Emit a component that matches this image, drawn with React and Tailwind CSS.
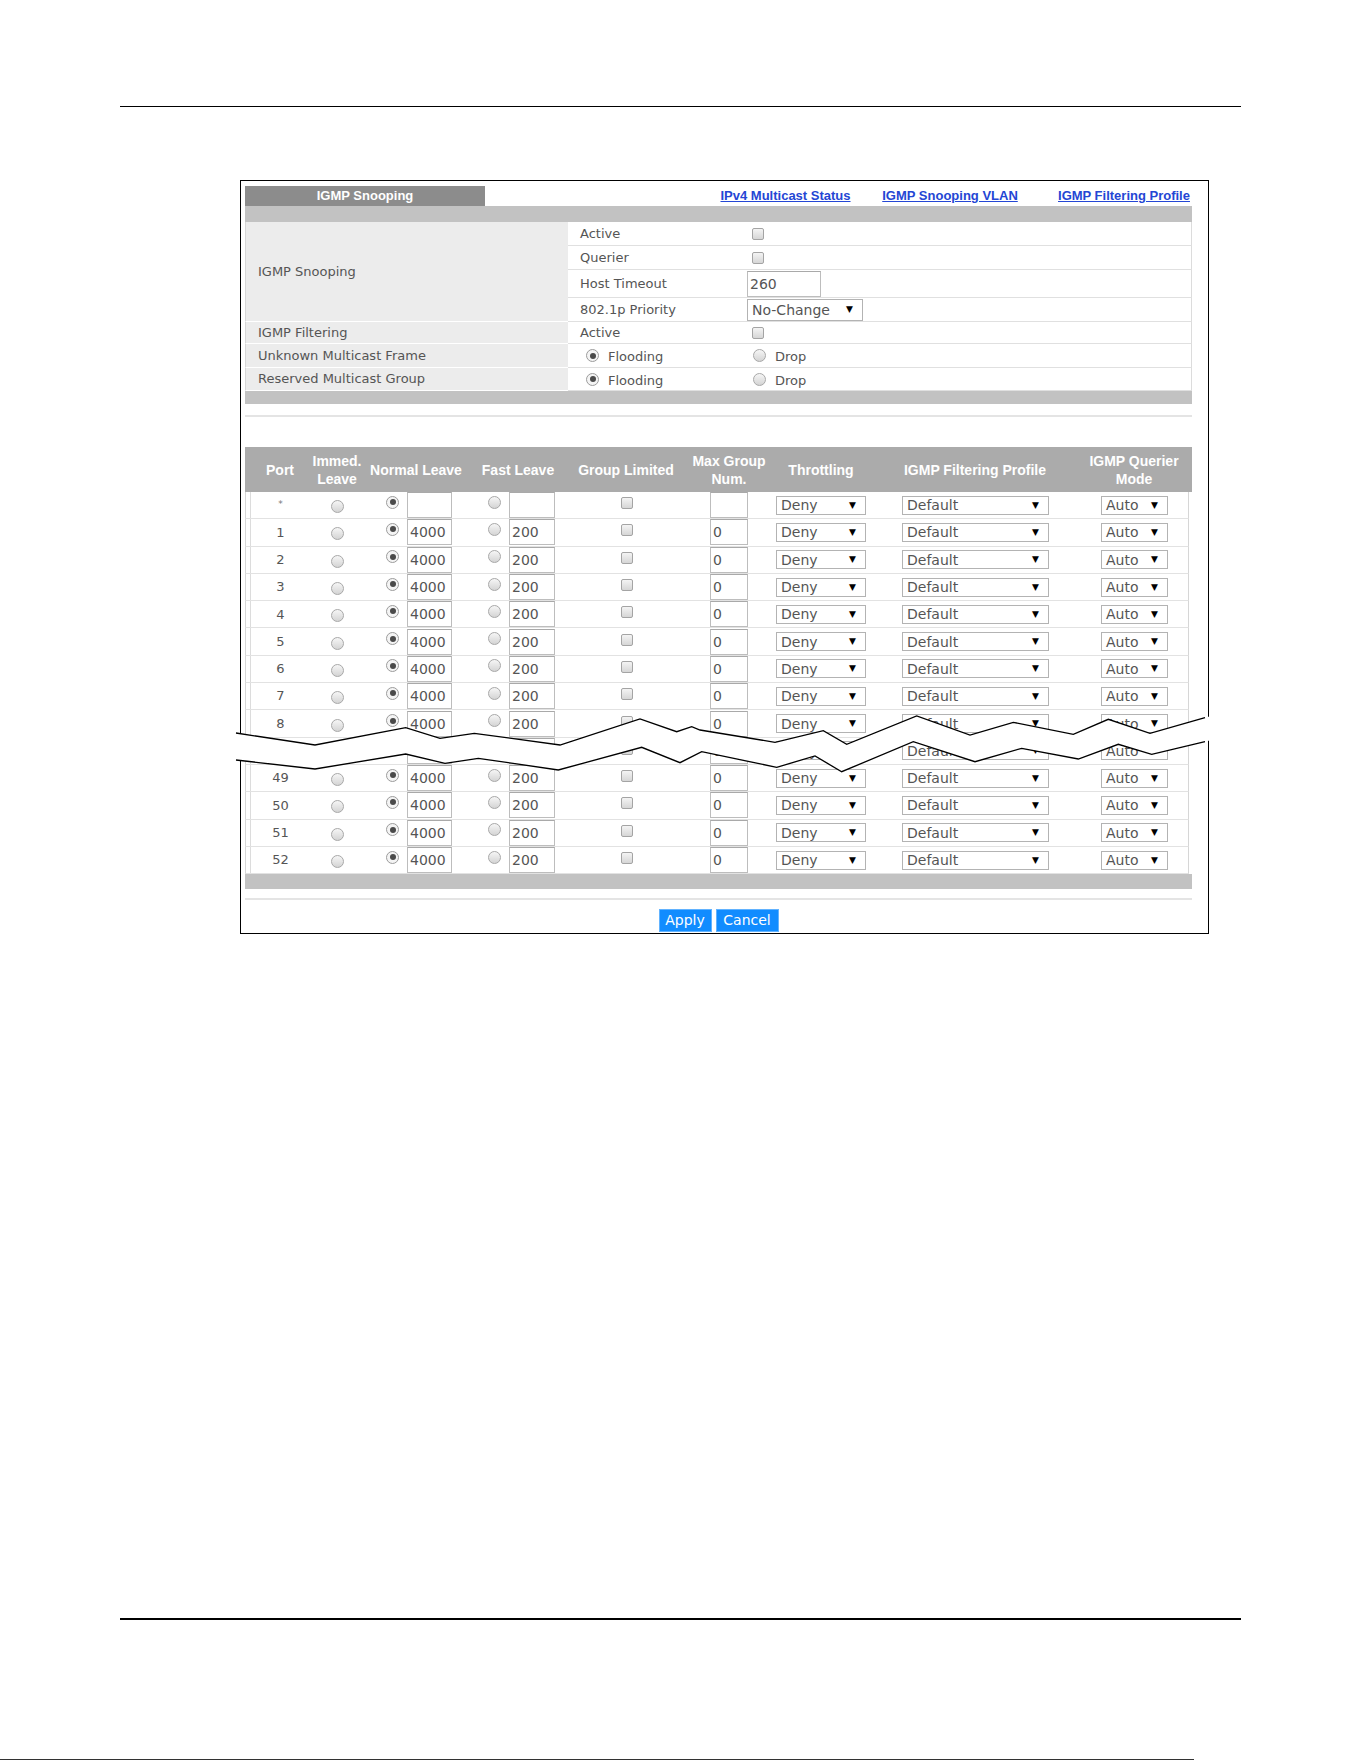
import React from "react";

const Radio = ({ checked, className = "" }) => (
  <div
    className={
      "w-[13px] h-[13px] shrink-0 rounded-full border flex items-center justify-center " +
      (checked ? "border-[#9c9c9c] bg-[#f4f4f4] " : "border-[#a8a8a8] bg-linear-to-b from-[#f6f6f6] to-[#d4d4d4] ") +
      className
    }
  >
    {checked && <div className="w-[6px] h-[6px] rounded-full bg-[#4a4a4a]" />}
  </div>
);

const Checkbox = ({ className = "" }) => (
  <div
    className={
      "w-[12px] h-[12px] shrink-0 rounded-[2px] border border-[#a4a4a4] bg-linear-to-b from-[#f4f4f4] to-[#d6d6d6] " +
      className
    }
  />
);

const Input = ({ value, w, h = "h-[26px]", className = "" }) => (
  <div
    className={
      "shrink-0 border border-[#bdbdbd] border-t-[#a9a9a9] bg-white text-[14px] leading-none text-[#555] pl-[2px] flex items-center " +
      w + " " + h + " " + className
    }
  >
    {value}
  </div>
);

const Select = ({ value, w, h = "h-[19px]", className = "" }) => (
  <div
    className={
      "shrink-0 border border-[#b3b3b3] bg-white text-[14px] leading-none text-[#555] pl-[4px] pr-[9px] flex items-center justify-between " +
      w + " " + h + " " + className
    }
  >
    <span>{value}</span>
    <span className="text-[9px] text-black">▼</span>
  </div>
);

const ports = ["*", "1", "2", "3", "4", "5", "6", "7", "8", "9", "49", "50", "51", "52"];

const PortRow = ({ p }) => {
  const star = p === "*";
  return (
    <div className="flex items-center h-[27.3px] w-[944px] border-b border-b-[#e2e2e2] border-x border-x-[#d6d6d6]">
      <div className="ml-[4px] w-[60px] h-full border-l border-[#dcdcdc] flex items-center justify-center text-[13px] text-[#555]">
        {star ? <span className="text-[9px] text-[#777]">*</span> : p}
      </div>
      <div className="w-[54px] flex justify-center mt-[3px]">
        <Radio />
      </div>
      <Radio checked className="ml-[22px] mb-[6px]" />
      <Input value={star ? "" : "4000"} w="w-[45px]" className="ml-[8px]" />
      <Radio className="ml-[36px] mb-[6px]" />
      <Input value={star ? "" : "200"} w="w-[46px]" className="ml-[8px]" />
      <Checkbox className="ml-[66px] mb-[4px]" />
      <Input value={star ? "" : "0"} w="w-[38px]" className="ml-[77px]" />
      <Select value="Deny" w="w-[90px]" className="ml-[28px]" />
      <Select value="Default" w="w-[147px]" className="ml-[36px]" />
      <Select value="Auto" w="w-[67px]" className="ml-[52px]" />
    </div>
  );
};

const HeadCell = ({ w, children }) => (
  <div className={"h-full flex items-center justify-center text-center " + w}>
    <div className="whitespace-nowrap font-['Liberation_Sans',Arial,sans-serif] text-[14px] leading-[18px] font-bold text-white">
      {children}
    </div>
  </div>
);

const SetRow = ({ h, label, children }) => (
  <div className={"flex items-center border-b border-b-[#e0e0e0] border-r border-r-[#dcdcdc] pl-[12px] " + h}>
    <div className="w-[167px] flex items-center text-[13px] text-[#555]">{label}</div>
    <div className="flex items-center">{children}</div>
  </div>
);

const LeftCell = ({ h, children }) => (
  <div className={"w-[323px] shrink-0 bg-[#ececec] border-l border-l-[#d6d6d6] border-b border-b-white flex items-center pl-[12px] text-[13px] text-[#555] " + h}>
    {children}
  </div>
);

const top1 = [
  [236, 733], [315, 745], [405.7, 727.7], [440, 738.3], [474.3, 733.3], [560, 745], [640, 719],
  [676.7, 731.7], [691.7, 726.7], [700, 730], [775, 742.3], [823.3, 730.7], [846.7, 744.3],
  [916.7, 716], [970, 735], [1013.3, 722.3], [1073.3, 734.3], [1108.3, 719.3], [1150, 733.3], [1205, 717.7],
];
const bot1 = [
  [236, 760], [315, 769], [405.7, 754], [445, 763.3], [478.3, 758.3], [558.3, 770], [641.7, 747.3],
  [680, 762.7], [701.7, 751.7], [776.7, 767.3], [815, 756], [841.7, 771.7], [913.3, 741.7],
  [975, 761.7], [1021.7, 748.3], [1078.3, 759], [1118.3, 744.3], [1151.7, 754.3], [1205, 741.7],
];
const pts = (a) => a.map(([x, y]) => `${x},${y}`).join(" ");
const fillPts =
  pts([[236, 733], ...top1, [1212, 715.7]]) + " " + pts([[1212, 739.7], ...[...bot1].reverse(), [236, 760]]);

const FloodLabel = () => (
  <>
    <Radio checked className="ml-[6px]" />
    <span className="ml-[9px] mt-[3px]">Flooding</span>
  </>
);

export default function App() {
  return (
    <div className="relative w-[1361px] h-[1761px] bg-white overflow-hidden font-['DejaVu_Sans',sans-serif]">
      <div className="pt-[106px] pl-[120px]">
        <div className="w-[1121px] h-[1px] bg-black" />
      </div>

      <div className="mt-[73px] ml-[240px] w-[969px] border border-black pt-[5px] pl-[4px] pb-[1px]">
        <div className="w-[947px]">
          {/* Tab row */}
          <div className="flex items-center h-[20px] font-['Liberation_Sans',Arial,sans-serif] font-bold">
            <div className="w-[240px] h-full bg-[#8c8c8c] flex items-center justify-center text-[13px] text-white">
              IGMP Snooping
            </div>
            <div className="flex-1 flex items-center justify-end text-[13px] text-[#2446d4] underline">
              <span className="w-[129px] flex justify-center whitespace-nowrap">IPv4 Multicast Status</span>
              <span className="ml-[30px] w-[140px] flex justify-center whitespace-nowrap">IGMP Snooping VLAN</span>
              <span className="ml-[37px] w-[134px] flex justify-center whitespace-nowrap">IGMP Filtering Profile</span>
              <span className="w-[1px]" />
            </div>
          </div>
          <div className="h-[16px] bg-[#c2c2c2]" />

          {/* Settings */}
          <div className="flex">
            <LeftCell h="h-[100px]">IGMP Snooping</LeftCell>
            <div className="flex-1">
              <SetRow h="h-[24px]" label="Active">
                <Checkbox className="ml-[5px]" />
              </SetRow>
              <SetRow h="h-[24px]" label="Querier">
                <Checkbox className="ml-[5px]" />
              </SetRow>
              <SetRow h="h-[28px]" label="Host Timeout">
                <Input value="260" w="w-[74px]" />
              </SetRow>
              <SetRow h="h-[24px]" label="802.1p Priority">
                <Select value="No-Change" w="w-[116px]" h="h-[22px]" className="pr-[8px]" />
              </SetRow>
            </div>
          </div>
          <div className="flex">
            <LeftCell h="h-[22px]">IGMP Filtering</LeftCell>
            <div className="flex-1">
              <SetRow h="h-[22px]" label="Active">
                <Checkbox className="ml-[5px]" />
              </SetRow>
            </div>
          </div>
          <div className="flex">
            <LeftCell h="h-[24px]">Unknown Multicast Frame</LeftCell>
            <div className="flex-1">
              <SetRow h="h-[24px]" label={<FloodLabel />}>
                <Radio className="ml-[6px]" />
                <span className="ml-[9px] mt-[3px] text-[13px] text-[#555]">Drop</span>
              </SetRow>
            </div>
          </div>
          <div className="flex">
            <LeftCell h="h-[23px]">Reserved Multicast Group</LeftCell>
            <div className="flex-1">
              <SetRow h="h-[23px]" label={<FloodLabel />}>
                <Radio className="ml-[6px]" />
                <span className="ml-[9px] mt-[3px] text-[13px] text-[#555]">Drop</span>
              </SetRow>
            </div>
          </div>
          <div className="h-[13px] bg-[#c2c2c2]" />
          <div className="mt-[11px] h-[2px] bg-[#e4e4e4]" />

          {/* Port table */}
          <div className="mt-[30px] h-[45px] bg-[#ababab] flex">
            <HeadCell w="w-[70px]">Port</HeadCell>
            <HeadCell w="w-[44px]">
              Immed.
              <br />
              Leave
            </HeadCell>
            <HeadCell w="w-[114px]">Normal Leave</HeadCell>
            <HeadCell w="w-[90px]">Fast Leave</HeadCell>
            <HeadCell w="w-[126px]">Group Limited</HeadCell>
            <HeadCell w="w-[80px]">
              Max Group
              <br />
              Num.
            </HeadCell>
            <HeadCell w="w-[104px]">Throttling</HeadCell>
            <HeadCell w="w-[204px]">IGMP Filtering Profile</HeadCell>
            <HeadCell w="w-[114px]">
              IGMP Querier
              <br />
              Mode
            </HeadCell>
          </div>
          <div>
            {ports.map((p) => (
              <PortRow key={p} p={p} />
            ))}
          </div>
          <div className="h-[15px] bg-[#c2c2c2]" />
          <div className="mt-[9px] h-[2px] bg-[#e4e4e4]" />
          <div className="mt-[9px] flex justify-center gap-[4px]">
            <div className="w-[53px] h-[23px] bg-[#118cff] border border-[#62b3ff] text-white text-[14px] flex items-center justify-center">
              Apply
            </div>
            <div className="w-[63px] h-[23px] bg-[#118cff] border border-[#62b3ff] text-white text-[14px] flex items-center justify-center">
              Cancel
            </div>
          </div>
        </div>
      </div>

      <div className="mt-[684px] ml-[120px] w-[1121px] h-[2px] bg-black" />
      <div className="mt-[139px] w-[1194px] h-[1px] bg-[#333]" />

      <svg
        className="absolute top-0 left-0 pointer-events-none"
        width="1361"
        height="1761"
        viewBox="0 0 1361 1761"
      >
        <polygon points={fillPts} fill="white" />
        <polyline points={pts(top1)} fill="none" stroke="black" strokeWidth="1.3" />
        <polyline points={pts(bot1)} fill="none" stroke="black" strokeWidth="1.3" />
      </svg>
    </div>
  );
}
